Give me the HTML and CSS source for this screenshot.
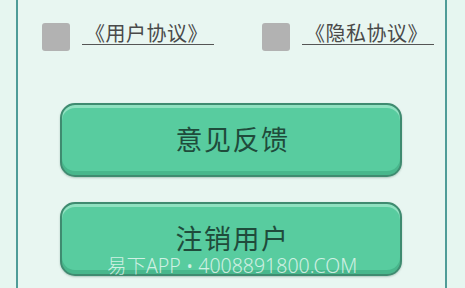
FILE: index.html
```html
<!DOCTYPE html>
<html lang="zh">
<head>
<meta charset="utf-8">
<link rel="stylesheet" href="styles.css">
</head>
<body>
<div class="page">
  <div class="frame">
    <div class="agree-row">
      <div class="agree agree-user">
        <span class="check"></span>
        <span class="link">《用户协议》</span>
      </div>
      <div class="agree agree-privacy">
        <span class="check"></span>
        <span class="link">《隐私协议》</span>
      </div>
    </div>
    <div class="buttons">
      <div class="btn">意见反馈</div>
      <div class="btn">注销用户</div>
    </div>
  </div>
  <div class="watermark">易下APP • 4008891800.COM</div>
</div>
</body>
</html>
```

FILE: styles.css
```css
html, body {
  margin: 0;
  padding: 0;
}
body {
  width: 465px;
  height: 288px;
  overflow: hidden;
  background: #e6f6f0;
  font-family: "Noto Sans CJK SC", "Noto Sans", sans-serif;
}
.page {
  position: relative;
  height: 288px;
  padding-left: 16px;
}
.frame {
  width: 427px;
  height: 288px;
  border-left: 2px solid #4f9c98;
  border-right: 2px solid #4f9c98;
  background: #e8f6f1;
  box-sizing: content-box;
  display: flex;
  flex-direction: column;
}
.agree-row {
  display: flex;
  padding-top: 23px;
  padding-left: 24px;
  height: 28px;
}
.agree {
  display: flex;
  align-items: flex-start;
}
.agree-user {
  width: 220px;
}
.check {
  width: 28px;
  height: 28px;
  border-radius: 3px;
  background: #b2b2b2;
  flex: none;
}
.link {
  margin-left: 12px;
  margin-top: 0px;
  padding: 0 6px 0 3px;
  font-size: 20px;
  line-height: 20px;
  height: 21px;
  color: #4a4a4a;
  border-bottom: 1.5px solid #555;
  letter-spacing: 0.5px;
}
.buttons {
  display: flex;
  flex-direction: column;
  align-items: center;
  gap: 25px;
  margin-top: 52px;
  padding-right: 1px;
}
.btn {
  width: 342px;
  height: 74px;
  box-sizing: border-box;
  border: 2px solid #3f8b70;
  border-radius: 15px;
  background: #58cc9f;
  box-shadow: inset 0 3px 0 #8fe1c0, inset 0 -4px 0 #48b78c, 0 1px 2px rgba(40, 90, 70, 0.3);
  display: flex;
  align-items: center;
  justify-content: center;
  font-size: 27px;
  font-weight: 400;
  color: #1f4b3b;
  letter-spacing: 1.5px;
  padding-bottom: 4px;
  padding-left: 3px;
}
.watermark {
  position: absolute;
  left: 107px;
  top: 250px;
  font-family: "Noto Sans", "Noto Sans CJK SC", sans-serif;
  font-size: 19.5px;
  font-weight: 300;
  color: rgba(255, 255, 255, 0.72);
  white-space: nowrap;
}
```
